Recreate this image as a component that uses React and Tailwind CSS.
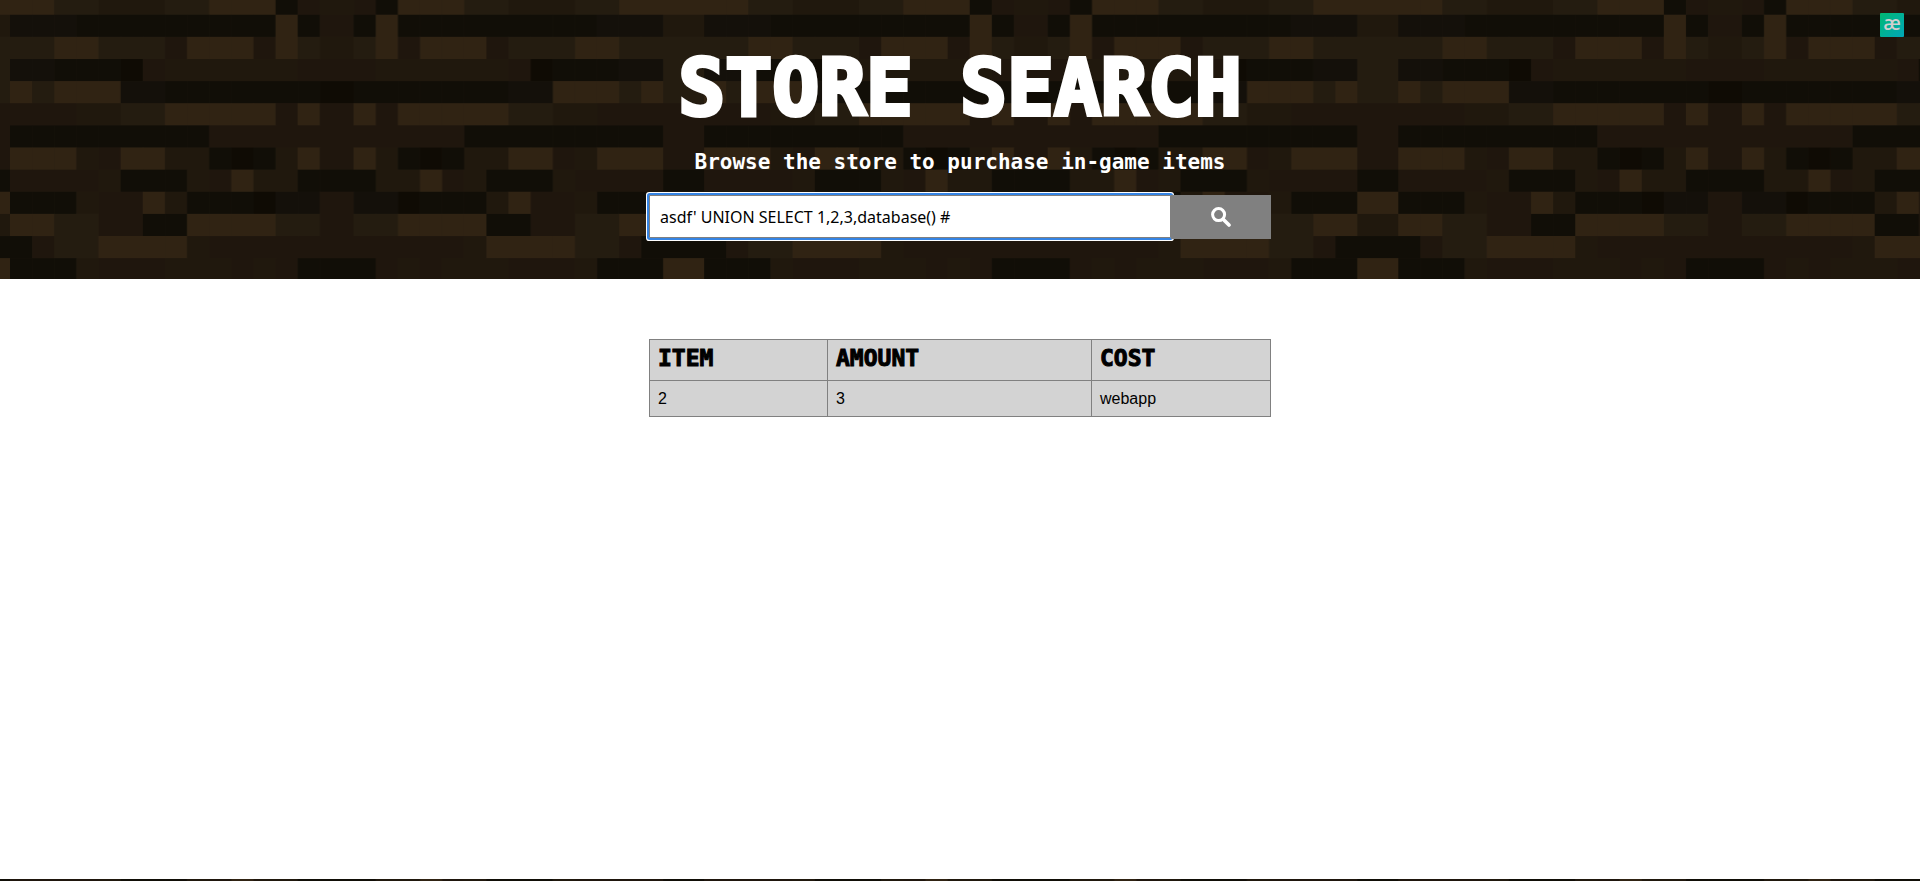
import React from "react";

// Plank texture: one mirrored half tile per row. 14 plank cells, then the inner seam, then the outer seam.
const SHADES = {
  D: "#110e07",
  E: "#0f0b04",
  K: "#14100a",
  B: "#302313",
  O: "#241c10",
  M: "#20180d",
  R: "#1f160d",
};
const ROWS = [
  "BBOOMMMOOBBBDRMB",
  "KKKDDDDDDDDDBDRM",
  "OOBBOOORBBBRBOMO",
  "KKDDDERMMMMMMRRO",
  "BOBBBKKDDDDDDDEO",
  "RRRMMOOBBBBBRBRR",
  "DDDDDDDDDRRRRRRR",
  "BBBMRBBMMDEDMBRR",
  "RRRRMDDDMRBMMDDD",
  "DDDMRRBMDDDEKKRB",
  "BBOORRDDBBBBOORM",
  "DROOBBBBMRRRRRRD",
  "DDDMRRRMMMRMRDDB",
];
const CELL = 22.13;
const SEAM = 33.5;
const EDGE = 41;
const TILE = CELL * 28 + SEAM + EDGE;

function tileRects() {
  const rects = [];
  ROWS.forEach((row, r) => {
    const y = r * CELL - 7.4;
    const add = (x, w, key) => rects.push({ x, y, w, fill: SHADES[key] });
    for (let c = 0; c < 14; c++) {
      add(c * CELL, CELL, row[c]);
      add(28 * CELL + SEAM - (c + 1) * CELL, CELL, row[c]);
    }
    add(14 * CELL, SEAM, row[14]);
    add(28 * CELL + SEAM, EDGE, row[15]);
  });
  return rects;
}

function Planks({ id, shift = 0 }) {
  return (
    <svg aria-hidden="true" className="absolute inset-0 h-full w-full">
      <defs>
        <pattern id={id} patternUnits="userSpaceOnUse" x="10" y={-shift} width={TILE} height="281">
          <rect width={TILE} height="281" fill="#1f160d" />
          {tileRects().map((p, i) => (
            <rect key={i} x={p.x} y={p.y} width={p.w + 0.3} height={CELL + 0.3} fill={p.fill} />
          ))}
        </pattern>
      </defs>
      <rect width="100%" height="100%" fill={`url(#${id})`} />
    </svg>
  );
}

export default function App() {
  return (
    <div className="flex min-h-screen flex-col bg-white text-black [font-family:'Liberation_Sans',Arial,sans-serif]">
      <header className="relative bg-[#1f160d] pb-10">
        <Planks id="planks-top" />
        <div className="relative mx-auto flex w-full max-w-[622px] flex-col items-center">
          <h1 className="mt-[42px] whitespace-nowrap text-[78px] font-bold leading-[92px] text-white [-webkit-text-stroke:4px_white] [font-family:'DejaVu_Sans_Mono',monospace]">
            STORE SEARCH
          </h1>
          <p className="mt-3.5 whitespace-nowrap text-[21px] font-bold leading-7 text-white [font-family:'DejaVu_Sans_Mono',monospace]">
            Browse the store to purchase in-game items
          </p>
          <form className="mt-[19px] flex w-full" onSubmit={(e) => e.preventDefault()}>
            <input
              type="text"
              aria-label="Search the store"
              defaultValue="asdf' UNION SELECT 1,2,3,database() #"
              className="h-[43px] min-w-0 flex-1 rounded-[1px] border border-[#808080] bg-white px-2.5 text-base text-black shadow-[0_0_0_2px_#3584e4,0_0_0_3px_#ffffff] outline-none [font-family:'Noto_Sans',sans-serif]"
            />
            <button
              type="submit"
              aria-label="Search"
              className="relative flex h-11 w-[100px] items-center justify-center bg-[#808080] text-white"
            >
              <svg viewBox="0 0 20 20" className="h-5 w-5" fill="none" stroke="currentColor" strokeLinecap="round">
                <circle cx="7.6" cy="7.6" r="6" strokeWidth="3" />
                <path d="M12.4 12.4 L18 18" strokeWidth="3.6" />
              </svg>
            </button>
          </form>
        </div>
      </header>

      <main className="flex-1 pt-[60px]">
        <table className="mx-auto w-full max-w-[622px] table-fixed border-collapse bg-[#d3d3d3] text-left text-base">
          <colgroup>
            <col className="w-[178px]" />
            <col className="w-[264px]" />
            <col />
          </colgroup>
          <thead>
            <tr className="h-[41px] align-top [font-family:'DejaVu_Sans_Mono',monospace]">
              {["ITEM", "AMOUNT", "COST"].map((label) => (
                <th key={label} scope="col" className="border border-[#808080] px-2 pt-1 text-[23px] font-bold leading-7 [-webkit-text-stroke:1px_black]">
                  {label}
                </th>
              ))}
            </tr>
          </thead>
          <tbody>
            <tr className="h-9">
              {["2", "3", "webapp"].map((value) => (
                <td key={value} className="border border-[#808080] px-2">
                  {value}
                </td>
              ))}
            </tr>
          </tbody>
        </table>
      </main>

      <footer className="relative h-0.5 bg-[#1f160d]">
        <Planks id="planks-bottom" shift={175} />
      </footer>

      <div className="absolute right-4 top-[13px] flex h-6 w-6 items-center justify-center rounded-[1px] bg-linear-to-br from-[#04b870] to-[#04a6b8] text-xl font-medium leading-none text-[#cfcfcf] [font-family:'Noto_Sans',sans-serif]">
        <span className="-mt-1">æ</span>
      </div>
    </div>
  );
}
